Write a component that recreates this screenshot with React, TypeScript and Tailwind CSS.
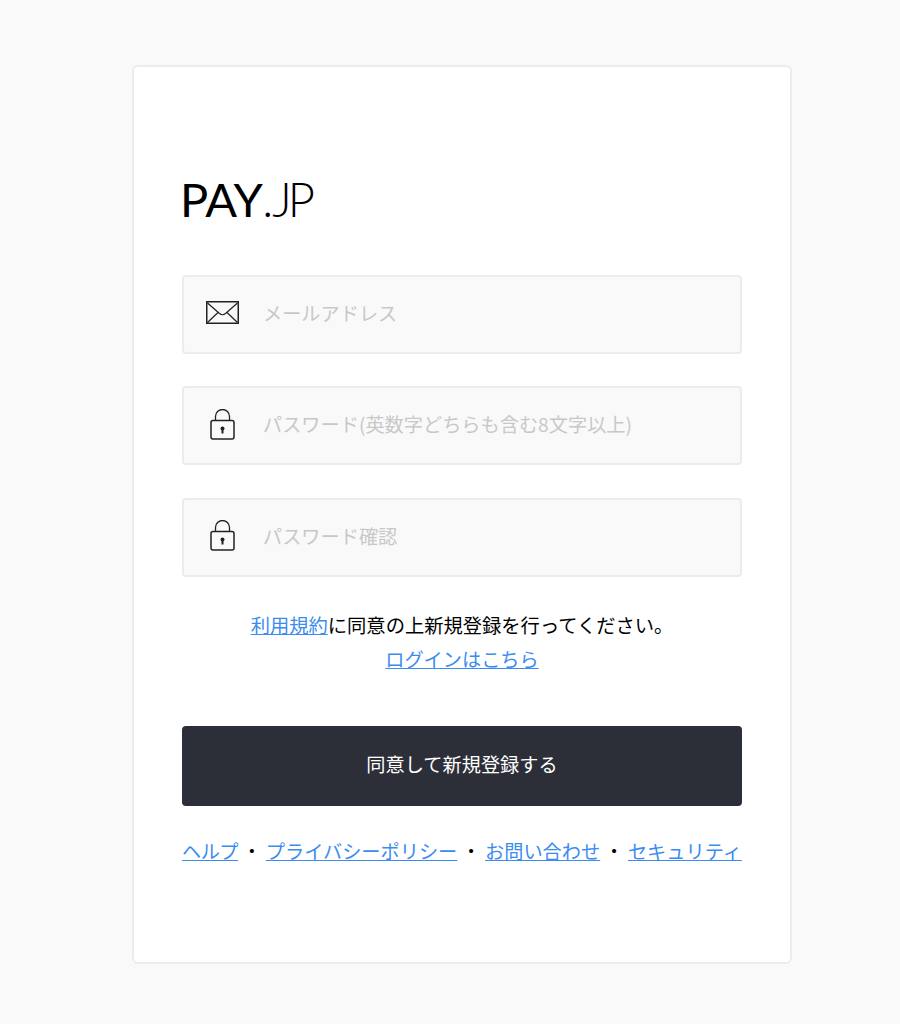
const font = '[font-family:"Noto_Sans_CJK_JP","Noto_Sans_CJK_SC",sans-serif]'

function MailIcon() {
  return (
    <svg width="33" height="23" viewBox="0 0 33 23" fill="none" stroke="#222" className="shrink-0">
      <rect x="0.75" y="0.75" width="31.5" height="21.5" strokeWidth="1.5" />
      <path d="M1.5 2 L13.5 12.5 Q16.5 15 19.5 12.5 L31.5 2 M1.5 21.5 L12 11.5 M31.5 21.5 L21 11.5" strokeWidth="1.2" />
    </svg>
  )
}

function LockIcon() {
  return (
    <svg width="25" height="31" viewBox="0 0 25 31" fill="none" stroke="#222" className="shrink-0">
      <rect x="1" y="11.5" width="23" height="18.5" rx="2" strokeWidth="1.5" />
      <path d="M5.5 11.5 V7.5 A7 7 0 0 1 19.5 7.5 V11.5" strokeWidth="1.3" />
      <circle cx="12.5" cy="19.5" r="2" fill="#222" stroke="none" />
      <rect x="11.5" y="19.5" width="2" height="5" fill="#222" stroke="none" />
    </svg>
  )
}

function Field({ icon, placeholder }: { icon: React.ReactNode; placeholder: string }) {
  return (
    <div className="flex h-[79px] items-center rounded-[4px] border-2 border-[#ececec] bg-[#f9f9f9]">
      <div className="flex w-[76px] justify-center pb-[3px]">{icon}</div>
      <span className="pb-[2px] pl-[3px] text-[19.2px] text-[#c8c8c8]">{placeholder}</span>
    </div>
  )
}

export default function App() {
  return (
    <div className={`min-h-[1024px] bg-[#f9f9f9] pt-[65px] ${font}`}>
      <div className="ml-[132px] flex h-[899px] w-[660px] flex-col rounded-[6px] border-2 border-[#ececec] bg-white px-[48px] pt-[102px]">
        <div className="-ml-[2px] flex h-[60px] items-center whitespace-nowrap font-['Lato',sans-serif] text-[47px] leading-none text-black">
          <span className="font-normal tracking-[-0.5px]">PAY</span>
          <span className="font-light tracking-[-7px]">.</span>
          <span className="pl-[6px] font-light tracking-[-4px]">JP</span>
        </div>

        <div className="mt-[45.7px] flex flex-col gap-[32.5px]">
          <Field icon={<MailIcon />} placeholder="メールアドレス" />
          <Field icon={<LockIcon />} placeholder="パスワード(英数字どちらも含む8文字以上)" />
          <Field icon={<LockIcon />} placeholder="パスワード確認" />
        </div>

        <div className="mt-[31px] text-center text-[19.2px] leading-[34px] text-black">
          <p className="text-[19.3px]">
            <a className="text-[#3b8cf0] underline">利用規約</a>に同意の上新規登録を行ってください。
          </p>
          <p>
            <a className="text-[#3b8cf0] underline">ログインはこちら</a>
          </p>
        </div>

        <button className="mt-[50px] h-[80px] w-full rounded-[4px] bg-[#2c2e38] pb-[2px] text-[19.2px] text-white">
          同意して新規登録する
        </button>

        <div className="mt-[28px] flex justify-between text-[19.2px] leading-[34px]">
          <a className="tracking-[-0.5px] text-[#3b8cf0] underline">ヘルプ</a>
          <span>・</span>
          <a className="text-[#3b8cf0] underline">プライバシーポリシー</a>
          <span>・</span>
          <a className="text-[#3b8cf0] underline">お問い合わせ</a>
          <span>・</span>
          <a className="text-[#3b8cf0] underline">セキュリティ</a>
        </div>
      </div>
    </div>
  )
}
